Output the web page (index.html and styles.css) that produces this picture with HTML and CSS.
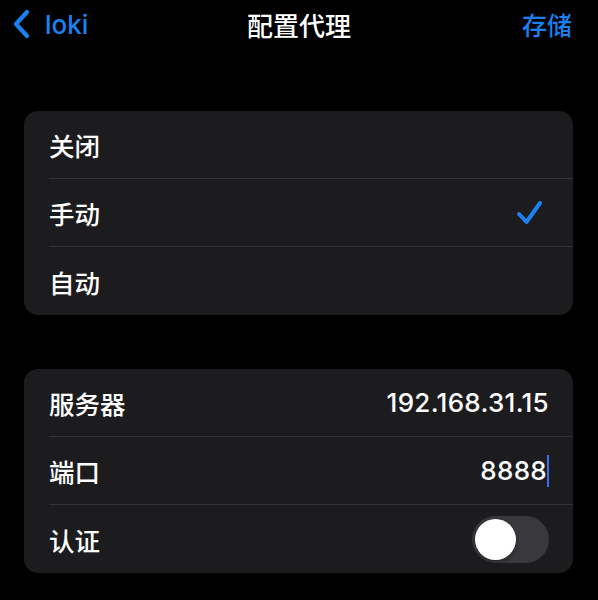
FILE: index.html
```html
<!DOCTYPE html>
<html lang="zh-CN">
<head>
    <meta charset="UTF-8">
    <meta name="viewport" content="width=device-width, initial-scale=1.0">
    <title>配置代理</title>
    <link rel="stylesheet" href="styles.css">
</head>
<body>
    <header class="navbar">
        <a class="nav-back" href="#">
            <svg class="chevron" width="18" height="30" viewBox="0 0 18 30">
                <path d="M15 3 L4 15 L15 27" fill="none" stroke="currentColor" stroke-width="4.2" stroke-linecap="round" stroke-linejoin="round"/>
            </svg>
            <span>loki</span>
        </a>
        <h1 class="nav-title">配置代理</h1>
        <a class="nav-action" href="#">存储</a>
    </header>

    <main class="content">
        <!-- 代理模式 -->
        <section class="group">
            <div class="row"><span class="label">关闭</span></div>
            <div class="row">
                <span class="label">手动</span>
                <svg class="check" width="28" height="28" viewBox="0 0 28 28">
                    <path d="M3 15 L10.5 23 L24 4" fill="none" stroke="currentColor" stroke-width="4" stroke-linecap="round" stroke-linejoin="round"/>
                </svg>
            </div>
            <div class="row"><span class="label">自动</span></div>
        </section>

        <!-- 手动配置 -->
        <section class="group">
            <div class="row">
                <span class="label">服务器</span>
                <span class="value">192.168.31.15</span>
            </div>
            <div class="row">
                <span class="label">端口</span>
                <span class="value">8888<span class="caret"></span></span>
            </div>
            <div class="row">
                <span class="label">认证</span>
                <span class="switch"><span class="knob"></span></span>
            </div>
        </section>
    </main>
</body>
</html>
```

FILE: styles.css
```css
body {
    margin: 0;
    padding: 0;
    background-color: #000;
    color: #fff;
    font-family: Inter, "Noto Sans CJK SC", sans-serif;
    font-weight: 500;
}

.navbar {
    display: flex;
    align-items: center;
    justify-content: space-between;
    height: 48px;
    padding: 0 26px 0 12px;
}

.nav-back {
    display: flex;
    align-items: center;
    gap: 15px;
    color: #1a82f0;
    text-decoration: none;
    font-size: 26px;
    width: 134px;
}

.nav-title {
    margin: 0;
    font-size: 26px;
    font-weight: 500;
    text-align: center;
    flex: 1;
}

.nav-action {
    width: 120px;
    text-align: right;
    color: #1a82f0;
    text-decoration: none;
    font-size: 25px;
}

.content {
    padding: 63px 25px 0 24px;
}

.group {
    background-color: #1c1c1e;
    border-radius: 14px;
    margin-bottom: 54px;
    overflow: hidden;
}

.row {
    display: flex;
    align-items: center;
    justify-content: space-between;
    height: 68px;
    margin-left: 25px;
    padding-right: 24px;
    border-bottom: 1px solid #333336;
    box-sizing: border-box;
}

.row:last-child {
    border-bottom: none;
}

.label {
    font-size: 25.5px;
}

.value {
    display: flex;
    align-items: center;
    font-size: 26px;
    letter-spacing: 0.3px;
}

.caret {
    width: 2px;
    height: 32px;
    margin-left: 0;
    background-color: #3c6df0;
}

.check {
    color: #1a82f0;
    margin-right: 5px;
}

/* 关闭状态的开关 */
.switch {
    display: flex;
    align-items: center;
    width: 77px;
    height: 47px;
    padding: 0 3px;
    box-sizing: border-box;
    border-radius: 24px;
    background-color: #39393d;
}

.knob {
    width: 41px;
    height: 41px;
    border-radius: 50%;
    background-color: #fff;
    box-shadow: 0 2px 4px rgba(0, 0, 0, 0.3);
}
```
